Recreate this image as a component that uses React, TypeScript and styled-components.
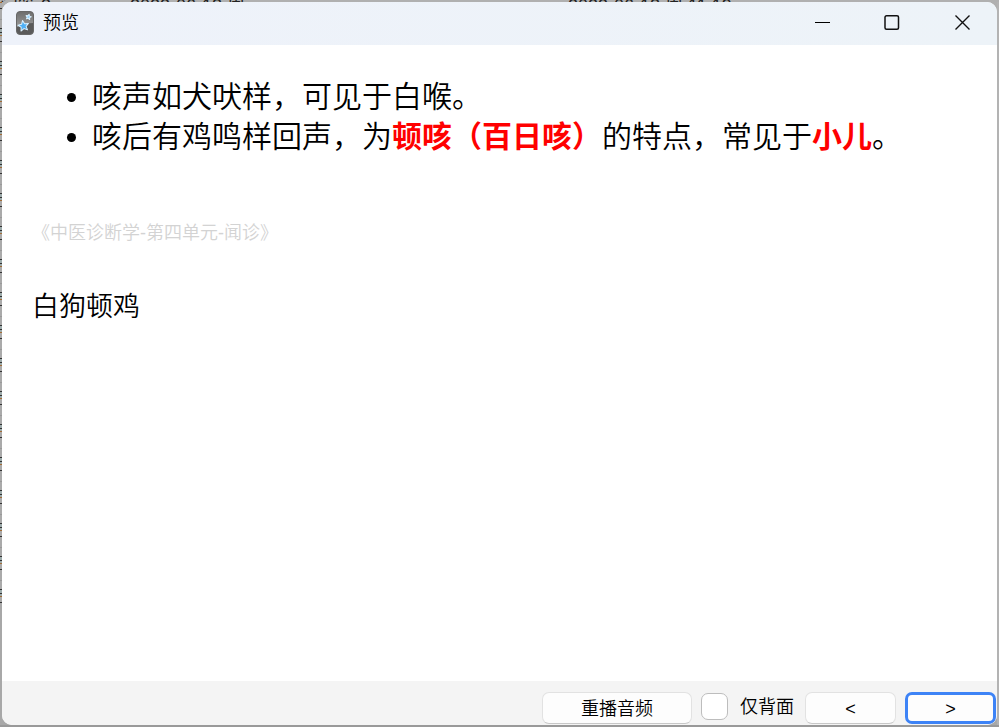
import React from "react";
import styled, { createGlobalStyle, css } from "styled-components";

const GlobalStyle = createGlobalStyle`
  *, *::before, *::after { box-sizing: border-box; }
  html, body, #root { height: 100%; }
  body {
    margin: 0;
    color: #000;
    font-family: "Liberation Sans", "Noto Sans CJK SC", sans-serif;
    overflow: hidden;
  }
  button, input { font: inherit; color: inherit; }
`;

const Desktop = styled.div`
  display: grid;
  grid-template-columns: 2px minmax(0, 1fr) 2px;
  grid-template-rows: 2px minmax(0, 1fr) 2px;
  height: 100%;
  background: linear-gradient(to bottom, #b0b0b0, #a8a8a8);
`;

const HiddenRow = styled.div`
  grid-column: 1 / -1;
  display: grid;
  grid-template-columns: 130px 438px 1fr;
  align-items: end;
  overflow: hidden;
  background: #b0b0b0;
  color: #222;
  font-size: 18px;
  line-height: 12px;
  white-space: nowrap;
`;

const ListEdge = styled.div`
  background: linear-gradient(to bottom, transparent 603px, #a8a8a8 603px),
    repeating-linear-gradient(
      to bottom,
      #a36b35 0 1px,
      #aaa 1px 6px,
      #333 6px 7px,
      #aaa 7px 17px,
      #999 17px 18px,
      #aaa 18px 26px,
      #333 26px 27px,
      #9dabab 27px 30px,
      #333 30px 31px,
      #9dabab 31px 33px
    );
`;

const RightEdge = styled.div`
  background: #b3b3b3;
`;

const BottomEdge = styled.div`
  grid-column: 1 / -1;
  background: #999;
`;

const Window = styled.section`
  display: flex;
  flex-direction: column;
  min-width: 0;
  overflow: hidden;
  background: #fff;
  border-radius: 10px;
`;

const TitleBar = styled.header`
  display: flex;
  align-items: stretch;
  justify-content: space-between;
  height: 43px;
  flex: none;
  background: linear-gradient(to right, #eef2fa, #edf3f8);
`;

const Title = styled.h1`
  display: flex;
  align-items: center;
  gap: 9px;
  margin: 0;
  padding: 0 0 2px 14px;
  font-size: 18px;
  line-height: 24px;
  font-weight: 350;
`;

const WindowControls = styled.div`
  display: flex;
`;

const ControlButton = styled.button`
  display: grid;
  place-items: center;
  width: 70px;
  padding: 0 0 2px;
  border: 0;
  background: transparent;
`;

const Card = styled.main`
  flex: 1;
  min-height: 0;
  padding: 32px 30px;
  font-weight: 350;
`;

const Points = styled.ul`
  margin: 0 0 64px;
  padding-left: 60px;
  font-size: 30px;
  line-height: 40px;
`;

const Key = styled.strong`
  color: #f00;
  font-weight: 700;
`;

const Source = styled.p`
  margin: 0 0 44px;
  color: #d3d3d3;
  font-size: 18px;
  line-height: 24px;
`;

const Mnemonic = styled.p`
  margin: 0;
  font-size: 27px;
  line-height: 36px;
`;

const Footer = styled.footer`
  display: flex;
  align-items: center;
  justify-content: flex-end;
  gap: 9px;
  height: 44px;
  flex: none;
  padding: 11px 1px 1px 10px;
  background: #f4f4f4;
  font-size: 18px;
  line-height: 24px;
  font-weight: 350;
`;

const PushButton = styled.button<{ $wide?: boolean; $active?: boolean }>`
  width: ${(p) => (p.$wide ? 150 : 91)}px;
  height: 32px;
  padding: 2px 0 0;
  border: 1px solid #e2e2e2;
  border-bottom-color: #c8c8c8;
  border-radius: 7px;
  background: #fdfdfd;
  ${(p) =>
    p.$active &&
    css`
      border: 3px solid #3d83f6;
    `}
`;

const CheckLabel = styled.label`
  display: flex;
  align-items: center;
  gap: 12px;
  padding: 0 2px 3px 0;
`;

const CheckBox = styled.input`
  appearance: none;
  width: 27px;
  height: 27px;
  margin: 0;
  border: 1px solid #bdbdbd;
  border-radius: 7px;
  background: #fff;
`;

const STAR =
  "0,-5.6 1.5,-2.1 5.3,-1.7 2.5,0.8 3.3,4.5 0,2.6 -3.3,4.5 -2.5,0.8 -5.3,-1.7 -1.5,-2.1";

const AppIcon = () => (
  <svg width="18" height="24" viewBox="0 0 18 24" aria-hidden="true">
    <defs>
      <linearGradient id="gloss" x1="0" y1="0" x2="0" y2="1">
        <stop offset="0" stopColor="#6e6e6e" />
        <stop offset="1" stopColor="#9a9a9a" />
      </linearGradient>
    </defs>
    <rect x="0.5" y="0.5" width="17" height="23" rx="3.5" fill="#5a5a5a" stroke="#686868" />
    <path d="M1 4a3 3 0 0 1 3-3h10a3 3 0 0 1 3 3v8Q10 12 1 16Z" fill="url(#gloss)" />
    <polygon
      points={STAR}
      transform="translate(7.5 15) rotate(-10)"
      fill="#4fb0f6"
      stroke="#d9f0ff"
      strokeLinejoin="round"
    />
    <polygon
      points={STAR}
      transform="translate(12.5 6) rotate(12) scale(0.5)"
      fill="#8fd0fa"
      stroke="#d9f0ff"
      strokeWidth="2"
      strokeLinejoin="round"
    />
  </svg>
);

const MinimizeIcon = () => (
  <svg width="17" height="17" viewBox="0 0 17 17" aria-hidden="true">
    <path d="M1 8.5h15" stroke="#000" />
  </svg>
);

const MaximizeIcon = () => (
  <svg width="17" height="17" viewBox="0 0 17 17" aria-hidden="true">
    <rect x="1" y="1.75" width="13.5" height="13.5" rx="1.5" fill="none" stroke="#111" strokeWidth="1.5" />
  </svg>
);

const CloseIcon = () => (
  <svg width="17" height="17" viewBox="0 0 17 17" aria-hidden="true">
    <path d="m1.5 1.5 14 14m0-14-14 14" stroke="#111" strokeWidth="1.4" />
  </svg>
);

export default function App() {
  return (
    <>
      <GlobalStyle />
      <Desktop>
        <HiddenRow aria-hidden="true">
          <span>问答 3</span>
          <span>2023-06-18 周</span>
          <span>2023-06-18 周 11:19</span>
        </HiddenRow>
        <ListEdge />
        <Window>
          <TitleBar>
            <Title>
              <AppIcon />
              预览
            </Title>
            <WindowControls>
              <ControlButton type="button" aria-label="最小化">
                <MinimizeIcon />
              </ControlButton>
              <ControlButton type="button" aria-label="最大化">
                <MaximizeIcon />
              </ControlButton>
              <ControlButton type="button" aria-label="关闭">
                <CloseIcon />
              </ControlButton>
            </WindowControls>
          </TitleBar>
          <Card>
            <Points>
              <li>咳声如犬吠样，可见于白喉。</li>
              <li>
                咳后有鸡鸣样回声，为<Key>顿咳（百日咳）</Key>的特点，常见于<Key>小儿</Key>。
              </li>
            </Points>
            <Source>《中医诊断学-第四单元-闻诊》</Source>
            <Mnemonic>白狗顿鸡</Mnemonic>
          </Card>
          <Footer>
            <PushButton type="button" $wide>
              重播音频
            </PushButton>
            <CheckLabel>
              <CheckBox type="checkbox" />
              仅背面
            </CheckLabel>
            <PushButton type="button">&lt;</PushButton>
            <PushButton type="button" $active>
              &gt;
            </PushButton>
          </Footer>
        </Window>
        <RightEdge />
        <BottomEdge />
      </Desktop>
    </>
  );
}
